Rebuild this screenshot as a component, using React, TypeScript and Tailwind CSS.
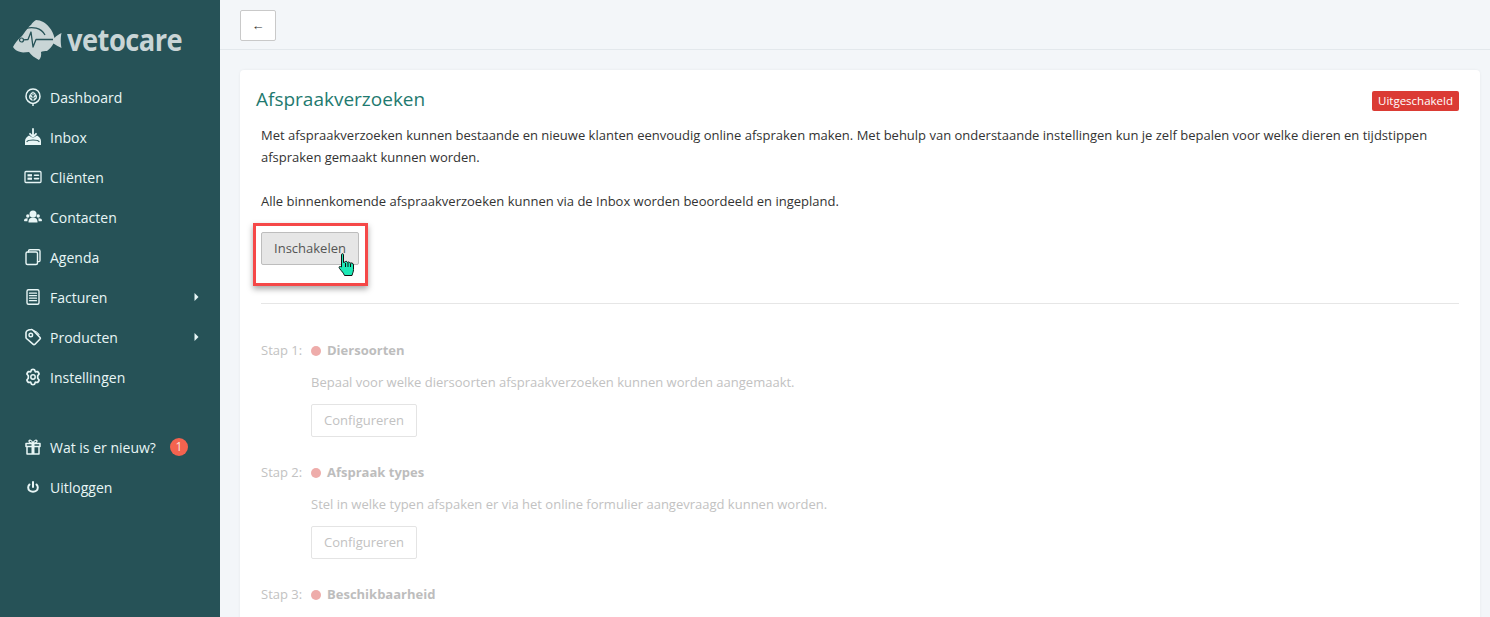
import React from 'react';

const ic = { width: 18, height: 18, viewBox: '0 0 18 18', fill: 'none', stroke: '#e8f6f6', strokeWidth: 1.6, strokeLinecap: 'round', strokeLinejoin: 'round' } as const;

const LeafIcon = () => (
  <svg {...ic}>
    <path d="M9 17.500V15.500M9 15.500C5 15 2 12 2 8.500C2 4 5 1 9 1C13 1 16 4 16 8.500C16 12 13 15 9 15.500Z" strokeWidth={1.5} />
    <path d="M9 3.500C6.500 5 5 7 5 9C5 11 7 12.500 9 13C11 12.500 13 11 13 9C13 7 11.500 5 9 3.500Z" fill="#e8f6f6" stroke="none" />
    <path d="M9 13V5M9 8L7 6.500M9 8L11 6.500M9 11L6.500 9.200M9 11L11.500 9.200" stroke="#265257" strokeWidth={0.9} />
  </svg>
);
const InboxIcon = () => (
  <svg {...ic}>
    <path d="M1 17V13C1 10.500 3 8.500 5 7.500L9 10L13 7.500C15 8.500 17 10.500 17 13V17Z" fill="#e8f6f6" stroke="none" />
    <path d="M3 13.500C4.500 11.500 13.500 11.500 15 13.500" stroke="#265257" strokeWidth={1.2} />
    <path d="M9 1V8.500M6 5.800L9 8.800L12 5.800" strokeWidth={1.8} stroke="#e8f6f6" />
  </svg>
);
const CardIcon = () => (
  <svg {...ic} strokeWidth={1.3}>
    <rect x="1" y="3.500" width="16" height="11" rx="1" />
    <rect x="3.500" y="6.200" width="4.500" height="2.200" fill="#e8f6f6" stroke="none" />
    <rect x="3.500" y="9.600" width="4.500" height="2.200" fill="#e8f6f6" stroke="none" />
    <path d="M10.500 7.200H14.500M10.500 10.600H14.500" strokeWidth={1.6} />
  </svg>
);
const PeopleIcon = () => (
  <svg {...ic} stroke="none" fill="#e8f6f6">
    <circle cx="9" cy="6" r="3.500" />
    <path d="M4.500 13.500C4.500 10.800 6.500 9.500 9 9.500C11.500 9.500 13.500 10.800 13.500 13.500V14.500H4.500Z" />
    <circle cx="14.200" cy="8" r="1.700" />
    <circle cx="3.800" cy="8" r="1.700" />
    <path d="M0 12.800C0 11 1.800 10.200 3.700 10.400L3.400 13.200H0.500Z" />
    <path d="M18 12.800C18 11 16.200 10.200 14.300 10.400L14.600 13.200H17.500Z" />
  </svg>
);
const AgendaIcon = () => (
  <svg {...ic} strokeWidth={1.4}>
    <rect x="2" y="4" width="11.500" height="12.500" rx="1.500" />
    <path d="M4.500 4V3C4.500 2.200 5 1.700 5.800 1.700H14.500C15.400 1.700 16 2.300 16 3.200V12.500C16 13.200 15.600 13.600 15 13.600H13.500" />
  </svg>
);
const InvoiceIcon = () => (
  <svg {...ic} strokeWidth={1.4}>
    <rect x="3" y="1.800" width="12" height="14.400" rx="1.500" />
    <path d="M5.500 5.200H12.500M5.500 7.700H12.500M5.500 10.200H12.500M5.500 12.700H12.500" strokeWidth={1.3} />
  </svg>
);
const TagIcon = () => (
  <svg {...ic} strokeWidth={1.6}>
    <path d="M2 9.500V4.500C2 3 3.200 2.500 4.500 2L7 1.500C7.800 1.300 8.500 1.700 9 2.200L15.800 9.200C16.400 9.800 16.400 10.700 15.800 11.300L11 16.200C10.400 16.800 9.600 16.800 9 16.200L2.500 10.500C2.200 10.200 2 9.900 2 9.500Z" />
    <circle cx="6.800" cy="7" r="1.800" strokeWidth={1.400} />
    <path d="M9.500 2.500C11.500 3 13.500 4.500 15 6.500" strokeWidth={1.200} />
  </svg>
);
const GearIcon = () => (
  <svg {...ic} strokeWidth={1.7}>
    <path d="M7.500 1.800C8.500 1.300 9.500 1.300 10.500 1.800L11.300 3.800L13.500 3.500C14.300 4.100 14.900 5.100 15.100 6L13.700 7.700V10.300L15.100 12C14.900 13 14.300 13.900 13.500 14.500L11.300 14.200L10.500 16.200C9.500 16.700 8.500 16.700 7.500 16.200L6.700 14.200L4.500 14.500C3.700 13.900 3.100 13 2.900 12L4.300 10.300V7.700L2.900 6C3.100 5.100 3.700 4.100 4.500 3.500L6.700 3.800Z" />
    <circle cx="9" cy="9" r="2.200" strokeWidth={1.500} />
  </svg>
);
const GiftIcon = () => (
  <svg {...ic} strokeWidth={1.5}>
    <rect x="2" y="5.500" width="14" height="3" />
    <path d="M3 8.500V16H15V8.500" />
    <rect x="7.500" y="5.500" width="3" height="10.500" fill="#e8f6f6" stroke="none" />
    <path d="M9 5.200C7.500 5.200 5 4.800 5 3.200C5 1.600 7.800 1.600 9 5.200C10.200 1.600 13 1.600 13 3.200C13 4.800 10.500 5.200 9 5.200Z" strokeWidth={1.300} />
  </svg>
);
const PowerIcon = () => (
  <svg {...ic} strokeWidth={2}>
    <path d="M9 4V9" />
    <path d="M5.500 6.500C4.600 7.400 4.200 8.300 4.200 9.500C4.200 12 6.200 13.800 9 13.800C11.800 13.800 13.800 12 13.800 9.500C13.800 8.300 13.400 7.400 12.500 6.500" />
  </svg>
);

const Caret = () => (
  <svg width="5" height="8" viewBox="0 0 5 8" className="ml-auto mr-[21px]">
    <path d="M0.500 0L4.500 4L0.500 8Z" fill="#e8f6f6" />
  </svg>
);

const Fish = () => (
  <svg width="50" height="40" viewBox="0 0 50 40" className="shrink-0">
    <path d="M1 27C3 23 6 19 10 16C13 12 17 6 19 5C20 3 22 1 24 0C29 0 34 3 37 7C40 10 41.500 14 42.500 18C44 16 47 14 49.500 13C48.500 17 48.500 24 49.500 28C47 27 44 25 41.500 23.500C40 26 38 29 35 31C33 31 30 31 29 32C29.500 35 29 38 27 40C23 38 19 35 17 32C14 32 11 33 8.500 32C5 31.500 2.500 29.500 1 27Z" fill="#c9d5d6" />
    <path d="M11.500 19.800L16 19.500L19 12L21 27L24 19.500H41" stroke="#265257" strokeWidth="1.300" fill="none" strokeLinejoin="round" />
    <circle cx="9.500" cy="20" r="2" fill="#c9d5d6" stroke="#265257" strokeWidth="1.200" />
    <path d="M14 8.500C20 6.500 29 7.500 33 15" stroke="#265257" strokeWidth="1.300" fill="none" />
  </svg>
);

const HandCursor = () => (
  <svg width="17" height="24" viewBox="0 0 17 24" className="absolute left-[338px] top-[253px]">
    <path d="M3.500 1.500C3.500 0.500 5.500 0.500 5.500 1.500V9.500L7 9C7.500 8 9 8 9.500 9.500C10.300 8.500 11.800 9 12 10.300C13 9.500 15.500 10 15.500 12V16.500C15.500 19 14.500 20 14 22.500H6.500C5.500 20 4 18.500 1.500 15.500C0.500 14 1.500 12.500 3.500 14Z" fill="#1de9b6" stroke="#111" strokeWidth="1" strokeLinejoin="round" />
    <path d="M7.500 10V14M10 10V14M12.500 11V14" stroke="#111" strokeWidth="1" />
  </svg>
);

const nav = [
  { label: 'Dashboard', icon: <LeafIcon /> },
  { label: 'Inbox', icon: <InboxIcon /> },
  { label: 'Cliënten', icon: <CardIcon /> },
  { label: 'Contacten', icon: <PeopleIcon /> },
  { label: 'Agenda', icon: <AgendaIcon /> },
  { label: 'Facturen', icon: <InvoiceIcon />, caret: true },
  { label: 'Producten', icon: <TagIcon />, caret: true },
  { label: 'Instellingen', icon: <GearIcon /> },
];

const Step = ({ n, title, text }: { n: number; title: string; text?: string }) => (
  <div className="mb-[25px]">
    <div className="flex items-center h-[22px]">
      <span className="w-[50px] text-[#c2c2c2]">Stap {n}:</span>
      <span className="w-[10px] h-[10px] rounded-full bg-[#eeacaa] mr-[6px]" />
      <span className="font-bold text-[#bdbdbd]">{title}</span>
    </div>
    {text && (
      <>
        <p className="ml-[50px] mt-[9px] h-[22px] leading-[22px] text-[#c2c2c2]">{text}</p>
        <button className="block ml-[50px] mt-[11px] w-[106px] h-[33px] border border-[#e4e4e4] rounded-[2px] bg-white text-[#c2c2c2]">Configureren</button>
      </>
    )}
  </div>
);

export default function App() {
  return (
    <div className="relative flex h-[617px] w-[1490px] overflow-hidden bg-[#f3f6f9] text-[13px] text-[#333] font-['Open_Sans',sans-serif]">
      <aside className="w-[220px] shrink-0 bg-[#265257] text-[#e8f6f6] text-[14px]">
        <div className="flex items-start h-[77px] pl-[12px] pt-[20px]">
          <Fish />
          <span className="ml-[5px] mt-[1px] origin-left scale-x-[0.88] text-[31px] leading-[36px] font-bold tracking-[-0.6px] text-[#c9d5d6]">vetocare</span>
        </div>
        <nav>
          {nav.map((item) => (
            <div key={item.label} className="flex items-center h-[40px] pl-[24px]">
              <span className="w-[26px] flex">{item.icon}</span>
              <span>{item.label}</span>
              {item.caret && <Caret />}
            </div>
          ))}
        </nav>
        <div className="mt-[30px]">
          <div className="flex items-center h-[40px] pl-[24px]">
            <span className="w-[26px] flex"><GiftIcon /></span>
            <span>Wat is er nieuw?</span>
            <span className="ml-[14px] w-[18px] h-[18px] rounded-full bg-[#f4634f] text-[#f9e3df] text-[12px] flex items-center justify-center">1</span>
          </div>
          <div className="flex items-center h-[40px] pl-[24px]">
            <span className="w-[26px] flex"><PowerIcon /></span>
            <span>Uitloggen</span>
          </div>
        </div>
      </aside>

      <main className="flex-1 min-w-0">
        <div className="h-[50px] border-b border-[#e3e8ec] pl-[20px] pt-[10px]">
          <button className="w-[36px] h-[31px] bg-white border border-[#c9c9c9] rounded-[2px] text-[13px] leading-none text-[#333]">←</button>
        </div>
        <div className="ml-[20px] mr-[10px] mt-[20px] rounded-[4px] bg-white shadow-[0_0_3px_rgba(0,0,0,0.06)] px-[21px] h-[600px]">
          <div className="flex items-center justify-between h-[54px] pt-[4px] -ml-[5px]">
            <h1 className="text-[19px] text-[#1f7a6f] font-normal">Afspraakverzoeken</h1>
            <span className="mt-[4px] h-[20px] px-[6px] rounded-[2px] bg-[#db3b34] text-white text-[11.5px] leading-[20px]">Uitgeschakeld</span>
          </div>
          <p className="leading-[22px]">
            Met afspraakverzoeken kunnen bestaande en nieuwe klanten eenvoudig online afspraken maken. Met behulp van onderstaande instellingen kun je zelf bepalen voor welke dieren en tijdstippen afspraken gemaakt kunnen worden.
          </p>
          <p className="leading-[22px] mt-[22px]">
            Alle binnenkomende afspraakverzoeken kunnen via de Inbox worden beoordeeld en ingepland.
          </p>
          <button className="block mt-[20px] w-[98px] h-[33px] bg-[#e6e6e6] border border-[#bdbdbd] rounded-[2px] text-[#555]">Inschakelen</button>
          <hr className="mt-[38px] border-[#e6e6e6]" />
          <div className="mt-[36px]">
            <Step n={1} title="Diersoorten" text="Bepaal voor welke diersoorten afspraakverzoeken kunnen worden aangemaakt." />
            <Step n={2} title="Afspraak types" text="Stel in welke typen afspaken er via het online formulier aangevraagd kunnen worden." />
            <Step n={3} title="Beschikbaarheid" />
          </div>
        </div>
      </main>
      <div className="absolute left-[253px] top-[223px] w-[115px] h-[63px] border-[3px] border-[#f54848] shadow-[0_3px_6px_rgba(0,0,0,0.35)]" />
      <HandCursor />
    </div>
  );
}
